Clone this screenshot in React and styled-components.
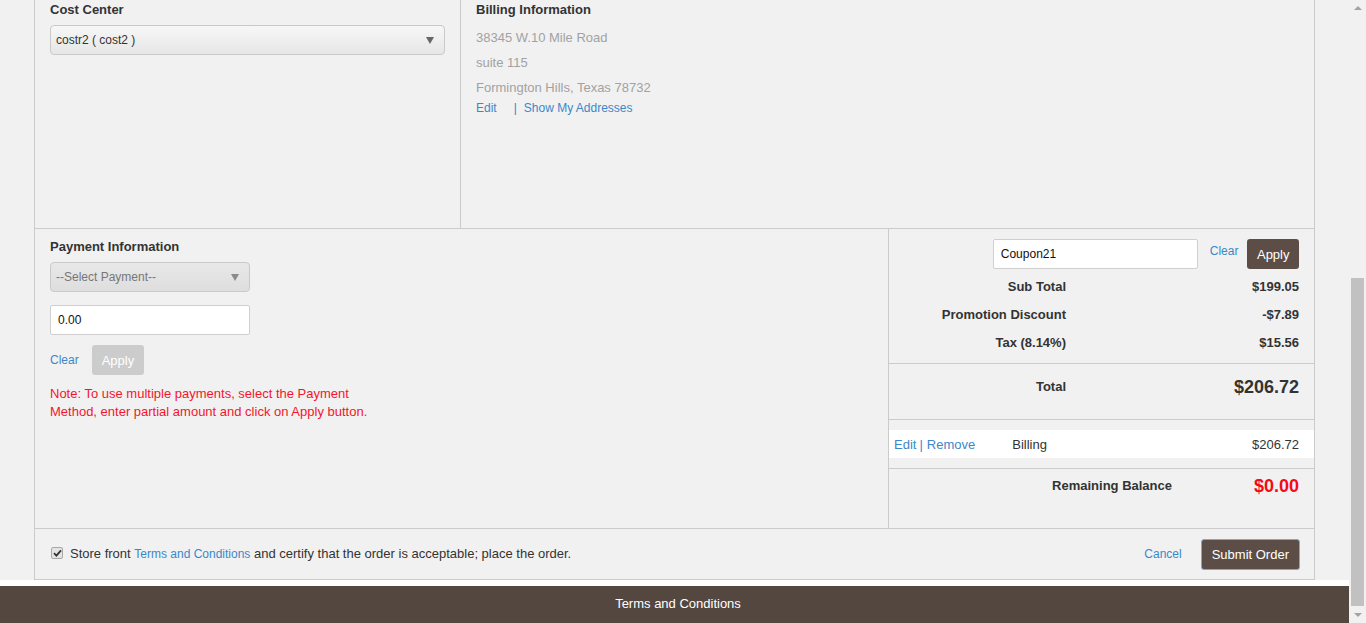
import React from 'react'
import styled, { createGlobalStyle } from 'styled-components'

const GlobalStyle = createGlobalStyle`
    html, body {
        margin: 0;
        padding: 0;
        height: 623px;
        overflow: hidden;
        background: #f1f1f1;
        font-family: "Liberation Sans", Arial, sans-serif;
        font-size: 13px;
        color: #333;
    }
`

const Shell = styled.div`
    display: flex;
    height: 623px;
`

const Page = styled.div`
    width: 1349px;
    display: flex;
    flex-direction: column;
`

const Panel = styled.div`
    margin: 0 34px;
    border: 1px solid #cbcbcb;
    border-top: none;
    background: #f1f1f1;
`

const Row = styled.div`
    display: grid;
    grid-template-columns: ${(p) => p.$cols};
    border-bottom: 1px solid #cbcbcb;
    height: ${(p) => p.$height}px;
`

const Col = styled.div`
    padding: ${(p) => p.$pad || '0 15px'};
    border-right: ${(p) => (p.$divider ? '1px solid #cbcbcb' : 'none')};
    display: flex;
    flex-direction: column;
    align-items: flex-start;
`

const Heading = styled.div`
    font-weight: bold;
    line-height: 20px;
`

const Select = styled.div`
    display: flex;
    align-items: center;
    justify-content: space-between;
    box-sizing: border-box;
    width: ${(p) => p.$width};
    height: 30px;
    margin-top: 5px;
    padding: 0 10px 0 5px;
    border: 1px solid #c9c9c9;
    border-radius: 4px;
    font-size: 12px;
    color: ${(p) => (p.$disabled ? '#777' : '#333')};
    background: ${(p) => (p.$disabled ? 'linear-gradient(#e8e8e8, #dedede)' : 'linear-gradient(#f7f7f7, #e6e6e6)')};

    &::after {
        content: '';
        border-left: 4px solid transparent;
        border-right: 4px solid transparent;
        border-top: 7px solid ${(p) => (p.$disabled ? '#8a8a8a' : '#666')};
    }
`

const Address = styled.div`
    margin-top: 5px;
`

const AddressLine = styled.div`
    line-height: 25px;
    color: #a2a2a2;
`

const LinkRow = styled.div`
    display: flex;
    align-items: center;
    font-size: 12px;
    line-height: 17px;
`

const Link = styled.a`
    color: #3b88c9;
    font-size: ${(p) => p.$size || 12}px;
    text-decoration: none;
    cursor: pointer;
`

const Pipe = styled.span`
    color: #3b88c9;
    margin: ${(p) => p.$margin || '0 6px'};
`

const TextInput = styled.div`
    box-sizing: border-box;
    width: ${(p) => p.$width};
    height: 30px;
    margin-top: ${(p) => p.$mt || 0}px;
    padding: 0 7px;
    display: flex;
    align-items: center;
    background: #fff;
    border: 1px solid #cfcfcf;
    border-radius: 2px;
    font-size: 12px;
    color: #111;
`

const ButtonRow = styled.div`
    display: flex;
    align-items: center;
    gap: ${(p) => p.$gap}px;
    margin-top: ${(p) => p.$mt || 0}px;
`

const Button = styled.button`
    height: ${(p) => p.$h || 30}px;
    padding: 0 ${(p) => p.$px || 10}px;
    border: ${(p) => (p.$focus ? '1px solid #7aa7e8' : 'none')};
    border-radius: 3px;
    background: ${(p) => (p.$disabled ? '#cccccc' : '#5c4e46')};
    color: #fff;
    font-family: inherit;
    font-size: 13px;
    cursor: pointer;
`

const Note = styled.div`
    margin-top: 10px;
    width: 320px;
    line-height: 18px;
    font-size: 13px;
    color: #f5152b;
`

const Summary = styled.div`
    border-left: 1px solid #cbcbcb;
    display: flex;
    flex-direction: column;
`

const CouponRow = styled.div`
    display: flex;
    align-items: center;
    justify-content: flex-end;
    padding: 10px 15px 4px 0;
`

const CouponClear = styled(Link)`
    margin: 0 9px 0 12px;
    position: relative;
    top: -3px;
`

const Figures = styled.div`
    display: grid;
    grid-template-columns: ${(p) => p.$label}px 1fr;
    align-items: center;
    align-content: start;
    padding-right: 15px;
    height: ${(p) => p.$h}px;
    border-bottom: ${(p) => (p.$line ? '1px solid #cbcbcb' : 'none')};
    border-top: ${(p) => (p.$topLine ? '1px solid #cbcbcb' : 'none')};
`

const FigLabel = styled.div`
    text-align: right;
    font-weight: bold;
    line-height: ${(p) => p.$lh || 28}px;
`

const FigValue = styled.div`
    text-align: right;
    font-weight: bold;
    line-height: ${(p) => p.$lh || 28}px;
    font-size: ${(p) => p.$size || 13}px;
    color: ${(p) => p.$color || '#333'};
`

const PaymentLine = styled.div`
    display: flex;
    align-items: center;
    height: 28px;
    margin: 10px 0;
    padding: 0 15px 0 5px;
    background: #fff;
`

const PaymentName = styled.span`
    margin-left: 37px;
    flex: 1;
`

const Footer = styled.div`
    display: flex;
    align-items: center;
    justify-content: space-between;
    height: 50px;
    padding: 0 14px 0 16px;
`

const Agreement = styled.label`
    display: flex;
    align-items: center;
    gap: 7px;
    margin-top: -2px;
`

const Check = styled.span`
    box-sizing: border-box;
    width: 12px;
    height: 12px;
    display: flex;
    align-items: center;
    justify-content: center;
    border: 1px solid #a8a8a8;
    border-radius: 2px;
    background: #e4e4e4;
`

const Actions = styled.div`
    display: flex;
    align-items: center;
    gap: 19px;
`

const Gap = styled.div`
    height: 6px;
    background: #fff;
`

const BottomBar = styled.div`
    flex: 1;
    display: flex;
    align-items: center;
    justify-content: center;
    padding: 0 0 3px 7px;
    background: #54473f;
    color: #fff;
`

const Track = styled.div`
    width: 17px;
    display: flex;
    flex-direction: column;
    align-items: center;
    background: #f1f1f1;
`

const Arrow = styled.div`
    height: 17px;
    display: flex;
    align-items: center;
    justify-content: center;

    &::after {
        content: '';
        border-left: 4px solid transparent;
        border-right: 4px solid transparent;
        ${(p) => (p.$up ? 'border-bottom' : 'border-top')}: 4px solid #a3a3a3;
    }
`

const Thumb = styled.div`
    width: 13px;
    margin-top: ${(p) => p.$top}px;
    height: ${(p) => p.$height}px;
    background: #c1c1c1;
`

export default function App() {
    return (
        <Shell>
            <GlobalStyle />
            <Page>
                <Panel>
                    <Row $cols="426px 1fr" $height={228}>
                        <Col $divider>
                            <Heading>Cost Center</Heading>
                            <Select $width="395px">costr2 ( cost2 )</Select>
                        </Col>
                        <Col>
                            <Heading>Billing Information</Heading>
                            <Address>
                                <AddressLine>38345 W.10 Mile Road</AddressLine>
                                <AddressLine>suite 115</AddressLine>
                                <AddressLine>Formington Hills, Texas 78732</AddressLine>
                            </Address>
                            <LinkRow>
                                <Link>Edit</Link>
                                <Pipe $margin="0 7px 0 17px">|</Pipe>
                                <Link>Show My Addresses</Link>
                            </LinkRow>
                        </Col>
                    </Row>
                    <Row $cols="853px 1fr" $height={299}>
                        <Col $pad="8px 15px 0">
                            <Heading>Payment Information</Heading>
                            <Select $width="200px" $disabled>--Select Payment--</Select>
                            <TextInput $width="200px" $mt={13}>0.00</TextInput>
                            <ButtonRow $gap={13} $mt={10}>
                                <Link>Clear</Link>
                                <Button $disabled $h={30} $px={10}>Apply</Button>
                            </ButtonRow>
                            <Note>
                                Note: To use multiple payments, select the Payment Method, enter partial amount and click on Apply button.
                            </Note>
                        </Col>
                        <Summary>
                            <CouponRow>
                                <TextInput $width="205px">Coupon21</TextInput>
                                <CouponClear>Clear</CouponClear>
                                <Button $h={30} $px={9.5}>Apply</Button>
                            </CouponRow>
                            <Figures $label={177} $h={90} $line>
                                <FigLabel>Sub Total</FigLabel>
                                <FigValue>$199.05</FigValue>
                                <FigLabel>Promotion Discount</FigLabel>
                                <FigValue>-$7.89</FigValue>
                                <FigLabel>Tax (8.14%)</FigLabel>
                                <FigValue>$15.56</FigValue>
                            </Figures>
                            <Figures $label={177} $h={55} $line>
                                <FigLabel $lh={46}>Total</FigLabel>
                                <FigValue $lh={46} $size={18}>$206.72</FigValue>
                            </Figures>
                            <PaymentLine>
                                <Link $size={13}>Edit</Link>
                                <Pipe $margin="0 4px 0 3px">|</Pipe>
                                <Link $size={13}>Remove</Link>
                                <PaymentName>Billing</PaymentName>
                                <span>$206.72</span>
                            </PaymentLine>
                            <Figures $label={283} $h={59} $topLine>
                                <FigLabel $lh={34}>Remaining Balance</FigLabel>
                                <FigValue $lh={34} $size={18} $color="#f50a16">$0.00</FigValue>
                            </Figures>
                        </Summary>
                    </Row>
                    <Footer>
                        <Agreement>
                            <Check>
                                <svg width="9" height="8" viewBox="0 0 9 8">
                                    <path d="M1 4.2 L3.4 6.6 L8 1.4" stroke="#333" strokeWidth="1.8" fill="none" />
                                </svg>
                            </Check>
                            <span>
                                Store front <Link>Terms and Conditions</Link> and certify that the order is acceptable; place the order.
                            </span>
                        </Agreement>
                        <Actions>
                            <Link>Cancel</Link>
                            <Button $focus $h={31} $px={10}>Submit Order</Button>
                        </Actions>
                    </Footer>
                </Panel>
                <Gap />
                <BottomBar>Terms and Conditions</BottomBar>
            </Page>
            <Track>
                <Arrow $up />
                <Thumb $top={261} $height={329} />
                <Arrow />
            </Track>
        </Shell>
    )
}
